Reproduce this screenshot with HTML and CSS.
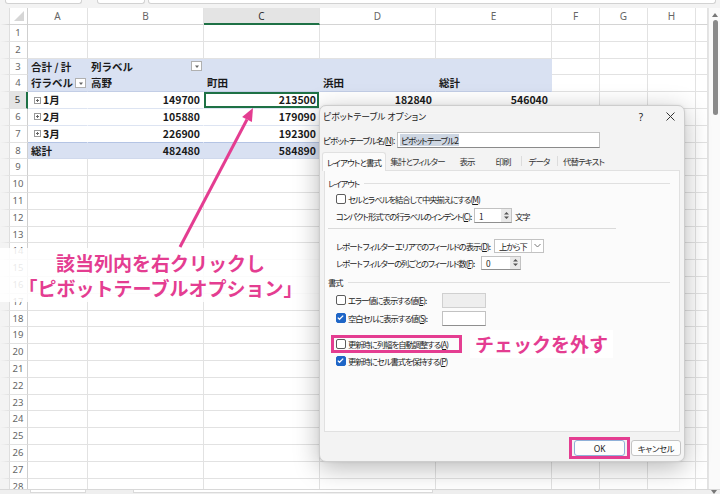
FILE: index.html
```html
<!DOCTYPE html>
<html lang="ja">
<head>
<meta charset="utf-8">
<title>ピボットテーブル オプション</title>
<link rel="stylesheet" href="styles.css">
</head>
<body>
<div class="app">
  <div class="topbar"><span class="tb namebox"></span><span class="tb fx"></span><span class="tb formula"></span></div>
  <div class="main">
    <div class="sheet">
      <div class="row head"><span class="rh corner"></span><span>A</span><span>B</span><span class="hsel">C</span><span>D</span><span>E</span><span>F</span><span>G</span><span>H</span><span></span></div>
      <div class="row"><span class="rh">1</span><span></span><span></span><span></span><span></span><span></span><span></span><span></span><span></span><span></span></div>
      <div class="row"><span class="rh">2</span><span></span><span></span><span></span><span></span><span></span><span></span><span></span><span></span><span></span></div>
      <div class="row"><span class="rh">3</span><span class="pv hd r3">合計 / 計</span><span class="pv hd r3 sb">列ラベル<em class="fbtn"><svg width="8" height="7" viewBox="0 0 8 7"><path d="M2 2.5h4L4 5z" fill="#666"/></svg></em></span><span class="pv hd r3"></span><span class="pv hd r3"></span><span class="pv hd r3"></span><span></span><span></span><span></span><span></span></div>
      <div class="row"><span class="rh">4</span><span class="pv hd r4 sb">行ラベル<em class="fbtn"><svg width="8" height="7" viewBox="0 0 8 7"><path d="M2 2.5h4L4 5z" fill="#666"/></svg></em></span><span class="pv hd r4">高野</span><span class="pv hd r4">町田</span><span class="pv hd r4">浜田</span><span class="pv hd r4">総計</span><span></span><span></span><span></span><span></span></div>
      <div class="row"><span class="rh cur">5</span><span class="pv lbl"><svg class="plus" width="7" height="7" viewBox="0 0 7 7"><rect x=".5" y=".5" width="6" height="6" fill="#fff" stroke="#9a9a9a"/><path d="M2 3.5h3M3.5 2v3" stroke="#666"/></svg>1月</span><span class="pv num">149700</span><span class="pv num active">213500</span><span class="pv num">182840</span><span class="pv num">546040</span><span></span><span></span><span></span><span></span></div>
      <div class="row"><span class="rh">6</span><span class="pv lbl"><svg class="plus" width="7" height="7" viewBox="0 0 7 7"><rect x=".5" y=".5" width="6" height="6" fill="#fff" stroke="#9a9a9a"/><path d="M2 3.5h3M3.5 2v3" stroke="#666"/></svg>2月</span><span class="pv num">105880</span><span class="pv num">179090</span><span class="pv num"></span><span class="pv num"></span><span></span><span></span><span></span><span></span></div>
      <div class="row"><span class="rh">7</span><span class="pv lbl r7"><svg class="plus" width="7" height="7" viewBox="0 0 7 7"><rect x=".5" y=".5" width="6" height="6" fill="#fff" stroke="#9a9a9a"/><path d="M2 3.5h3M3.5 2v3" stroke="#666"/></svg>3月</span><span class="pv num r7">226900</span><span class="pv num r7">192300</span><span class="pv num r7"></span><span class="pv num r7"></span><span></span><span></span><span></span><span></span></div>
      <div class="row"><span class="rh">8</span><span class="pv hd r8">総計</span><span class="pv hd r8 num">482480</span><span class="pv hd r8 num">584890</span><span class="pv hd r8 num"></span><span class="pv hd r8 num"></span><span></span><span></span><span></span><span></span></div>
      <div class="row"><span class="rh">9</span><span></span><span></span><span></span><span></span><span></span><span></span><span></span><span></span><span></span></div>
      <div class="row"><span class="rh">10</span><span></span><span></span><span></span><span></span><span></span><span></span><span></span><span></span><span></span></div>
      <div class="row"><span class="rh">11</span><span></span><span></span><span></span><span></span><span></span><span></span><span></span><span></span><span></span></div>
      <div class="row"><span class="rh">12</span><span></span><span></span><span></span><span></span><span></span><span></span><span></span><span></span><span></span></div>
      <div class="row"><span class="rh">13</span><span></span><span></span><span></span><span></span><span></span><span></span><span></span><span></span><span></span></div>
      <div class="row"><span class="rh">14</span><span></span><span></span><span></span><span></span><span></span><span></span><span></span><span></span><span></span></div>
      <div class="row"><span class="rh">15</span><span></span><span></span><span></span><span></span><span></span><span></span><span></span><span></span><span></span></div>
      <div class="row"><span class="rh">16</span><span></span><span></span><span></span><span></span><span></span><span></span><span></span><span></span><span></span></div>
      <div class="row"><span class="rh">17</span><span></span><span></span><span></span><span></span><span></span><span></span><span></span><span></span><span></span></div>
      <div class="row"><span class="rh">18</span><span></span><span></span><span></span><span></span><span></span><span></span><span></span><span></span><span></span></div>
      <div class="row"><span class="rh">19</span><span></span><span></span><span></span><span></span><span></span><span></span><span></span><span></span><span></span></div>
      <div class="row"><span class="rh">20</span><span></span><span></span><span></span><span></span><span></span><span></span><span></span><span></span><span></span></div>
      <div class="row"><span class="rh">21</span><span></span><span></span><span></span><span></span><span></span><span></span><span></span><span></span><span></span></div>
      <div class="row"><span class="rh">22</span><span></span><span></span><span></span><span></span><span></span><span></span><span></span><span></span><span></span></div>
      <div class="row"><span class="rh">23</span><span></span><span></span><span></span><span></span><span></span><span></span><span></span><span></span><span></span></div>
      <div class="row"><span class="rh">24</span><span></span><span></span><span></span><span></span><span></span><span></span><span></span><span></span><span></span></div>
      <div class="row"><span class="rh">25</span><span></span><span></span><span></span><span></span><span></span><span></span><span></span><span></span><span></span></div>
      <div class="row"><span class="rh">26</span><span></span><span></span><span></span><span></span><span></span><span></span><span></span><span></span><span></span></div>
      <div class="row"><span class="rh">27</span><span></span><span></span><span></span><span></span><span></span><span></span><span></span><span></span><span></span></div>
      <div class="row"><span class="rh">28</span><span></span><span></span><span></span><span></span><span></span><span></span><span></span><span></span><span></span></div>
    </div>
    <div class="vscroll"><svg width="6" height="4" viewBox="0 0 6 4"><path d="M0 4L3 0l3 4z" fill="#777"/></svg><span class="thumb"></span></div>
  </div>
  <div class="bottombar"><span class="bb b1"></span><span class="bb b2"></span><svg class="bbdown" width="6" height="4" viewBox="0 0 6 4"><path d="M0 0L3 4l3-4z" fill="#777"/></svg></div>
</div>

<div class="note1">該当列内を右クリックし<br>「ピボットテーブルオプション」</div>
<svg class="arrow" width="90" height="155" viewBox="170 100 90 155"><path d="M180 247L247 119.5" stroke="#e43d91" stroke-width="3" fill="none"/><path d="M253 108L251.9 122.1L242.1 116.9z" fill="#e43d91"/></svg>

<div class="dialog">
  <div class="dtitle"><span class="dt">ピボットテーブル オプション</span><span class="help">?</span><span class="close"><svg width="9" height="9" viewBox="0 0 9 9"><path d="M.5.5l8 8M8.5.5l-8 8" stroke="#333" stroke-width="1"/></svg></span></div>
  <div class="namerow"><span class="nlab">ピボットテーブル名(<u>N</u>):</span><span class="ninput"><span class="seltext">ピボットテーブル2</span></span></div>
  <div class="tabs"><span class="tab on t1">レイアウトと書式</span><span class="tab t2">集計とフィルター</span><span class="tab t3">表示</span><span class="tab t4">印刷</span><span class="tab sepl t5">データ</span><span class="tab sepl t6">代替テキスト</span></div>
  <div class="panel">
    <div class="grp">レイアウト</div>
    <div class="chk"><span class="box"></span>セルとラベルを結合して中央揃えにする(<u>M</u>)</div>
    <div class="frow"><span class="lw1">コンパクト形式での行ラベルのインデント(<u>C</u>):</span><span class="spin w38"><span class="val">1</span><span class="arr"><svg width="5" height="9" viewBox="0 0 5 9"><path d="M0 3.5L2.5 1L5 3.5zM0 5.5L2.5 8L5 5.5z" fill="#555"/></svg></span></span><span class="unit">文字</span></div>
    <div class="sep"></div>
    <div class="frow"><span class="lw2">レポート フィルター エリアでのフィールドの表示(<u>D</u>):</span><span class="drop"><span class="val">上から下</span><span class="chev"><svg width="7" height="5" viewBox="0 0 7 5"><path d="M.5 1L3.5 4L6.5 1" fill="none" stroke="#777"/></svg></span></span></div>
    <div class="frow"><span class="lw3">レポート フィルターの列ごとのフィールド数(<u>F</u>):</span><span class="spin w40"><span class="val">0</span><span class="arr"><svg width="5" height="9" viewBox="0 0 5 9"><path d="M0 3.5L2.5 1L5 3.5zM0 5.5L2.5 8L5 5.5z" fill="#555"/></svg></span></span></div>
    <div class="grp g2">書式</div>
    <div class="frow vrow"><span class="box"></span><span class="lw4">エラー値に表示する値(<u>E</u>):</span><span class="tin dis"></span></div>
    <div class="frow vrow"><span class="box on"><svg width="9" height="9" viewBox="0 0 9 9"><path d="M1.8 4.6l1.7 1.7L7.2 2.6" fill="none" stroke="#fff" stroke-width="1.3"/></svg></span><span class="lw4">空白セルに表示する値(<u>S</u>):</span><span class="tin"></span></div>
    <div class="hlrow">
      <div class="hl"><span class="box"></span>更新時に列幅を自動調整する(<u>A</u>)</div>
      <div class="note2">チェックを外す</div>
    </div>
    <div class="chk keep"><span class="box on"><svg width="9" height="9" viewBox="0 0 9 9"><path d="M1.8 4.6l1.7 1.7L7.2 2.6" fill="none" stroke="#fff" stroke-width="1.3"/></svg></span>更新時にセル書式を保持する(<u>P</u>)</div>
  </div>
  <div class="btns"><span class="okhl"><span class="btn ok">OK</span></span><span class="btn">キャンセル</span></div>
</div>
</body>
</html>
```

FILE: styles.css
```css
* { box-sizing: border-box; }
html, body { margin: 0; padding: 0; }
body {
  width: 720px; height: 494px; overflow: hidden; position: relative;
  background: #fff; color: #222;
  font-family: "Noto Sans CJK JP", "Noto Sans", sans-serif;
}
.app { display: flex; flex-direction: column; height: 494px; }

/* top formula strip */
.topbar { height: 8px; flex: none; background: #f3f3f3; display: flex; align-items: flex-start; padding-left: 5px; }
.tb { height: 4px; background: #fff; border: 1px solid #d2d2d2; border-top: none; border-radius: 0 0 3px 3px; }
.namebox { width: 77px; }
.fx { width: 48px; margin-left: 15px; }
.formula { flex: 1; margin-left: 3px; margin-right: 4px; }

.main { flex: 1; display: flex; min-height: 0; }
.sheet { flex: 1; overflow: hidden; }

.row {
  display: grid;
  grid-template-columns: 28px 60px 116px 116px 116px 116px 48px 48px 48px 12px;
  height: 16.8px;
}
.row > span {
  border-right: 1px solid #e2e2e2; border-bottom: 1px solid #e2e2e2;
  overflow: hidden; white-space: nowrap;
}
.row.head { height: 17px; }
.row.head > span {
  text-align: center; font-family: "Noto Sans", sans-serif; font-size: 10px; line-height: 16px;
  color: #666; border-bottom-color: #d4d4d4;
}
.row.head > .hsel { background: #e4e4e4; border-bottom: 2px solid #1e7145; color: #333; }
.rh {
  border-left: 9px solid #f3f3f3;
  box-shadow: inset 1px 0 #dedede;
  text-align: center; font-family: "Noto Sans", sans-serif; font-size: 9.5px; line-height: 16px; color: #666;
}
.row > .rh { border-right-color: #cfcfcf; }
.row > .rh.cur { background: #e4e4e4; border-right: 2px solid #1e7145; color: #333; }
.corner { position: relative; }
.corner::after {
  content: ""; position: absolute; right: 3px; bottom: 3px;
  border-style: solid; border-width: 0 0 10px 10px;
  border-color: transparent transparent #d6d6d6 transparent;
}

/* pivot */
.row > .pv {
  background: #fff; border-right-color: transparent; border-bottom-color: #dde4f2;
  font-weight: 700; font-size: 10.5px; line-height: 15.8px; padding: 0 3px; color: #1a1a1a;
  display: flex; align-items: center;
}
.row > .pv.hd { background: #d9e1f2; }
.row > .pv.r3 { border-bottom-color: #d9e1f2; }
.row > .pv.r4 { border-bottom-color: #c3cee6; }
.row > .pv.r7 { border-bottom-color: #b4c4e4; }
.row > .pv.r8 { border-bottom-color: #d0d9ec; }
.pv.num { justify-content: flex-end; }
.pv.sb { justify-content: space-between; padding-right: 1px; }
.pv.lbl { padding-left: 6px; }
.plus { margin-right: 2px; flex: none; }
.row > .pv.active { box-shadow: inset 0 0 0 2px #1e7145; }
.fbtn {
  width: 11px; height: 10px; border: 1px solid #b0b0b0; background: #fff;
  display: flex; align-items: center; justify-content: center; flex: none;
}

/* scrollbars */
.vscroll {
  width: 12px; flex: none; background: #fafafa; border-left: 1px solid #e4e4e4;
  display: flex; flex-direction: column; align-items: center; padding: 5px 0 0 1px;
}
.thumb { width: 5px; height: 95px; margin-top: 3px; background: #8a8a8a; border-radius: 3px; }
.bottombar {
  height: 5px; flex: none; background: #efefef; border-top: 1px solid #d8d8d8;
  display: flex; align-items: flex-start; padding-left: 30px;
}
.bb { height: 3px; background: #fff; border: 1px solid #dadada; border-top: none; }
.b1 { width: 56px; }
.b2 { width: 300px; margin-left: 47px; }
.bbdown { margin-left: auto; margin-right: 3px; }

/* annotations */
.note1 {
  position: absolute; left: 0; top: 248px; width: 320px; height: 54px;
  background: rgba(255,255,255,0.86);
  text-align: center; color: #e43d91; font-size: 19px; font-weight: 700; line-height: 25px; padding: 2px 0 0 1px;
  z-index: 2;
}
.arrow { position: absolute; left: 170px; top: 100px; z-index: 3; }

/* dialog */
.dialog {
  position: absolute; left: 319px; top: 105px; width: 366px; height: 357px; z-index: 4;
  background: #f3f3f3; border: 1px solid #cdcdcd; border-radius: 7px;
  box-shadow: 0 6px 26px rgba(0,0,0,0.28), 0 0 3px rgba(0,0,0,0.08);
  font-size: 8.3px; letter-spacing: -1px; color: #1b1b1b; font-feature-settings: "palt"; white-space: nowrap;
  display: flex; flex-direction: column;
}
.dialog u { text-decoration: underline; text-underline-offset: 1px; }
.dtitle { height: 21px; display: flex; align-items: center; padding-left: 3px; flex: none; font-size: 8.8px; letter-spacing: 0; }
.dt { flex: 1; }
.help { width: 30px; text-align: center; font-size: 10px; font-family: "Noto Sans", sans-serif; }
.close { width: 28px; display: flex; justify-content: center; }
.namerow { margin-top: 4px; height: 17px; display: flex; align-items: center; padding-left: 3px; flex: none; font-size: 8.5px; letter-spacing: -0.9px; }
.nlab { width: 74px; flex: none; }
.ninput {
  width: 203px; height: 16px; background: #fff; border: 1px solid #c2c2c2; border-bottom-color: #8a8a8a;
  display: flex; align-items: center; padding-left: 2px;
}
.seltext { background: #cdd6e2; line-height: 12px; padding: 0 1px; }
.tabs { margin-top: 4px; height: 18px; display: flex; align-items: stretch; padding-left: 2px; position: relative; z-index: 1; flex: none; font-size: 8.5px; letter-spacing: -0.9px; }
.tab { display: flex; align-items: center; justify-content: center; position: relative; color: #333; }
.tab.on {
  background: #fbfbfb; border: 1px solid #e1e1e1; border-bottom: none;
  border-radius: 3px 3px 0 0; margin-bottom: -1px; color: #1b1b1b;
}
.t1 { width: 64px; }
.t2 { width: 63px; }
.t3, .t4, .t5 { width: 36px; }
.t6 { width: 53px; }
.tab.sepl::before {
  content: ""; position: absolute; left: 0; top: 4px; width: 1px; height: 10px; background: #dcdcdc;
}
.panel {
  margin: 0 4px; height: 262px; flex: none; background: #fbfbfb; border: 1px solid #e1e1e1;
  padding: 5px 9px 0 11px;
}
.grp { display: flex; align-items: center; height: 14px; margin-left: -8px; }
.grp::after { content: ""; flex: 1; height: 1px; background: #e0e0e0; margin-left: 5px; }
.grp.g2 { margin-top: 4px; }
.chk { display: flex; align-items: center; height: 17px; }
.chk.keep { height: 15px; }
.box {
  width: 10px; height: 10px; border: 1px solid #5c5c5c; border-radius: 2px; background: #fff;
  margin-right: 2px; flex: none; display: flex;
}
.box.on { background: #1f66c7; border-color: #1f66c7; }
.box.on svg { margin: -1px; }
.frow { display: flex; align-items: center; height: 17px; }
.frow > span { flex: none; }
.lw1 { width: 138px; }
.lw2 { width: 158px; }
.lw3 { width: 145px; }
.lw4 { width: 94px; }
.vrow { height: 18px; }
.grp.g2 + .vrow { margin-top: 2px; }
.spin {
  height: 15px; background: #fff; border: 1px solid #c2c2c2; border-bottom-color: #8f8f8f;
  display: flex; align-items: stretch; letter-spacing: 0;
}
.w38 { width: 38px; }
.w40 { width: 40px; height: 14px; }
.spin .val { flex: 1; padding-left: 4px; display: flex; align-items: center; }
.spin .arr { width: 10px; background: #e9e9e9; display: flex; align-items: center; justify-content: center; }
.unit { margin-left: 3px; }
.sep { height: 1px; width: 288px; background: #dadada; margin: 4px 0 8px -8px; }
.drop {
  width: 50px; height: 14px; background: #fff; border: 1px solid #c2c2c2;
  display: flex; align-items: stretch;
}
.drop .val { flex: 1; padding-left: 4px; display: flex; align-items: center; }
.drop .chev { width: 12px; border-left: 1px solid #d4d4d4; display: flex; align-items: center; justify-content: center; }
.tin { width: 44px; height: 15px; background: #fff; border: 1px solid #c2c2c2; border-bottom-color: #8f8f8f; }
.tin.dis { background: #eeeeee; border-color: #d0d0d0; }
.hlrow { display: flex; align-items: center; height: 18px; margin: 8px 0 0 -5px; }
.hl {
  height: 18px; width: 131px; flex: none; border: 3px solid #e43d91; padding-left: 2px;
  display: flex; align-items: center;
}
.note2 {
  margin-left: 8px; background: #fff; padding: 2px 5px; flex: none; letter-spacing: 0;
  font-size: 19px; font-weight: 700; color: #e43d91; line-height: 24px; font-feature-settings: normal;
}
.btns { margin-top: 5px; display: flex; justify-content: flex-end; align-items: center; padding-right: 3px; gap: 1px; flex: none; letter-spacing: 0; }
.okhl { border: 3px solid #e43d91; padding: 0 2px; height: 22px; display: flex; align-items: center; }
.btn {
  width: 50px; height: 16px; background: #fdfdfd; border: 1px solid #c4c4c4; border-radius: 3px;
  display: flex; align-items: center; justify-content: center; font-size: 8.4px; letter-spacing: -0.3px;
}
.btn.ok { width: 51px; border-color: #8fb0d8; font-family: "Noto Sans", sans-serif; letter-spacing: 0; }
```
